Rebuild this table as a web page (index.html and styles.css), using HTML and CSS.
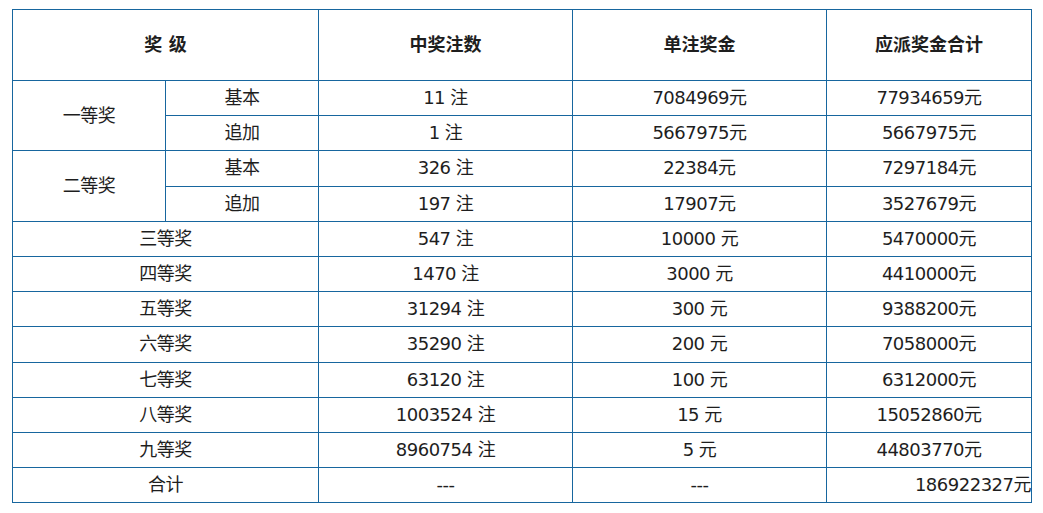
FILE: index.html
```html
<!DOCTYPE html>
<html lang="zh-CN">
<head>
<meta charset="utf-8">
<title>开奖详情</title>
<link rel="stylesheet" href="styles.css">
</head>
<body>
<table class="prize-table">
  <colgroup>
    <col class="c1"><col class="c2"><col class="c3"><col class="c4"><col class="c5">
  </colgroup>
  <thead>
    <tr class="head-row">
      <th colspan="2">奖 级</th>
      <th>中奖注数</th>
      <th>单注奖金</th>
      <th>应派奖金合计</th>
    </tr>
  </thead>
  <tbody>
    <tr><td rowspan="2">一等奖</td><td>基本</td><td>11 注</td><td>7084969元</td><td>77934659元</td></tr>
    <tr><td>追加</td><td>1 注</td><td>5667975元</td><td>5667975元</td></tr>
    <tr><td rowspan="2">二等奖</td><td>基本</td><td>326 注</td><td>22384元</td><td>7297184元</td></tr>
    <tr><td>追加</td><td>197 注</td><td>17907元</td><td>3527679元</td></tr>
    <tr><td colspan="2">三等奖</td><td>547 注</td><td>10000 元</td><td>5470000元</td></tr>
    <tr><td colspan="2">四等奖</td><td>1470 注</td><td>3000 元</td><td>4410000元</td></tr>
    <tr><td colspan="2">五等奖</td><td>31294 注</td><td>300 元</td><td>9388200元</td></tr>
    <tr><td colspan="2">六等奖</td><td>35290 注</td><td>200 元</td><td>7058000元</td></tr>
    <tr><td colspan="2">七等奖</td><td>63120 注</td><td>100 元</td><td>6312000元</td></tr>
    <tr><td colspan="2">八等奖</td><td>1003524 注</td><td>15 元</td><td>15052860元</td></tr>
    <tr><td colspan="2">九等奖</td><td>8960754 注</td><td>5 元</td><td>44803770元</td></tr>
    <tr><td colspan="2">合计</td><td>---</td><td>---</td><td class="total">186922327元</td></tr>
  </tbody>
</table>
</body>
</html>
```
FILE: styles.css
```css
html, body {
  margin: 0;
  padding: 0;
  background: #ffffff;
}
body {
  padding: 9px 12px;
  font-family: "DejaVu Sans", "Noto Sans CJK SC", sans-serif;
  color: #1e1e1e;
}
.prize-table {
  border-collapse: collapse;
  table-layout: fixed;
  width: 1019px;
  font-size: 18px;
  letter-spacing: -0.5px;
}
.c1 { width: 153px; }
.c2 { width: 153px; }
.c3 { width: 254px; }
.c4 { width: 254px; }
.c5 { width: 205px; }
.prize-table th,
.prize-table td {
  border: 1px solid #17669e;
  text-align: center;
  vertical-align: middle;
  padding: 0;
  line-height: 20px;
  white-space: nowrap;
}
.head-row th {
  height: 70px;
  font-weight: bold;
  letter-spacing: 0;
}
.prize-table tbody tr {
  height: 35.2px;
}
.prize-table td.total {
  text-align: right;
}
```
